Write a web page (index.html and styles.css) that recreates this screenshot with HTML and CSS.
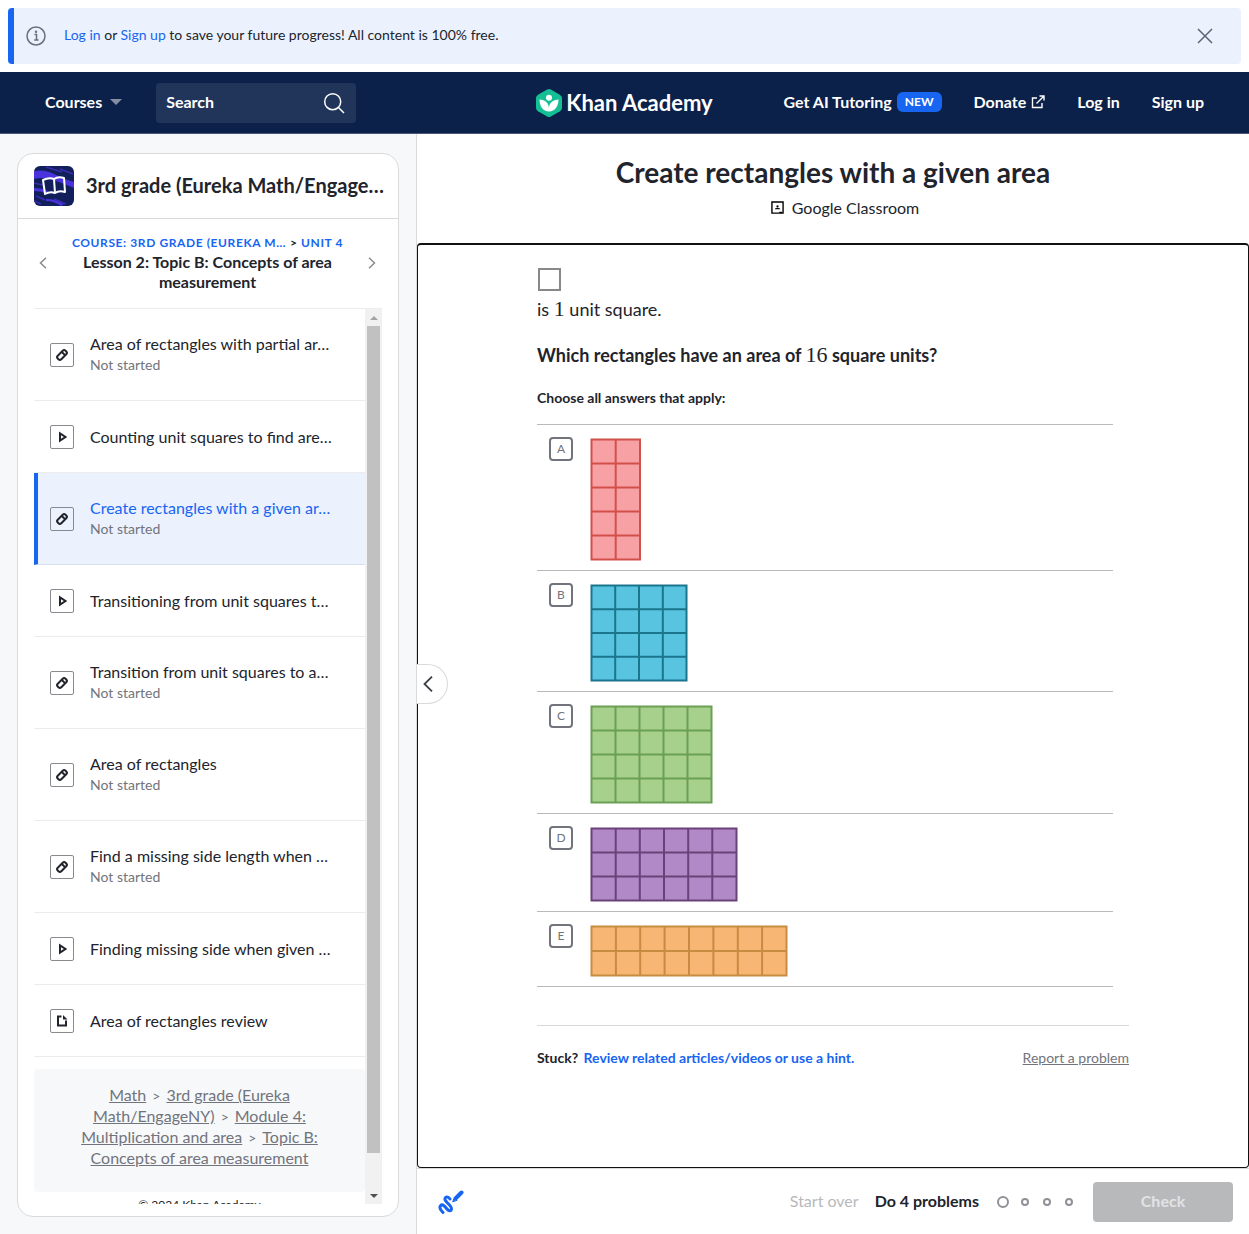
FILE: index.html
```html
<!DOCTYPE html>
<html lang="en">
<head>
<meta charset="utf-8">
<meta name="viewport" content="width=device-width, initial-scale=1">
<title>Create rectangles with a given area | Khan Academy</title>
<link rel="stylesheet" href="styles.css">
</head>
<body>
<svg class="sprite" aria-hidden="true">
  <symbol id="pencil" viewBox="0 0 22 22"><g transform="rotate(45 11 11)" fill="none" stroke="#21242c" stroke-width="2"><rect x="8.500" y="5.500" width="5" height="11" rx="2"/><path d="M8.500 9h5"/></g></symbol>
  <symbol id="play" viewBox="0 0 22 22"><path d="M9 7.300v7.400L14.500 11z" fill="none" stroke="#21242c" stroke-width="2"/></symbol>
  <symbol id="article" viewBox="0 0 22 22"><path d="M10.500 6.500H7v9h8v-5" fill="none" stroke="#21242c" stroke-width="2"/><path d="M12 5l4.500 4.500H12z" fill="#21242c"/></symbol>
</svg>

<aside class="banner">
  <svg class="banner-info" viewBox="0 0 20 20" fill="none" stroke="#6b6e78" stroke-width="1.500"><circle cx="10" cy="10" r="9"/><path d="M8.500 8.500h2V14M8.200 14h4.300"/><circle cx="10" cy="5.700" r=".5" fill="#6b6e78"/></svg>
  <p class="banner-text"><a href="#">Log in</a> or <a href="#">Sign up</a> to save your future progress! All content is 100% free.</p>
  <button class="icon-button" aria-label="Dismiss"><svg width="20" height="20" viewBox="0 0 20 20" fill="none" stroke="#5f6270" stroke-width="1.500"><path d="M3 3l14 14M17 3L3 17"/></svg></button>
</aside>

<header class="topbar">
  <div class="topbar-left">
    <button class="courses">Courses <span class="caret"></span></button>
    <form class="search">
      <input type="search" placeholder="Search" aria-label="Search">
      <svg width="22" height="22" viewBox="0 0 22 22" fill="none" stroke="#fff" stroke-width="1.500"><circle cx="9.700" cy="9.700" r="8"/><path d="M15.500 15.500l5.500 5.500"/></svg>
    </form>
  </div>
  <a class="logo" href="#">
    <svg width="26" height="28" viewBox="0 0 26 28"><path d="M11.200.5Q13-.5 14.800.5l9 5.200Q26 7 26 9v10q0 2-2 3.200l-9.200 5.300q-1.800 1-3.600 0L2 22.200Q0 21 0 19V9q0-2 2-3.300z" fill="#14bf96"/><circle cx="13" cy="8.700" r="3" fill="#fff"/><path d="M3.500 10.500c5.500 0 9.500 3.500 9.500 9 0-5.500 4-9 9.500-9 0 6.500-3.500 12-9.500 12s-9.500-5.500-9.500-12z" fill="#fff"/></svg>
    <span>Khan Academy</span>
  </a>
  <nav class="topbar-right">
    <a href="#">Get AI Tutoring <span class="badge">NEW</span></a>
    <a href="#">Donate <svg width="14" height="14" viewBox="0 0 14 14" fill="none" stroke="#fff" stroke-width="1.400"><path d="M6 3H1.500v9.500H11V8M8.500 1H13v4.500M13 1L5.500 8.500"/></svg></a>
    <a href="#">Log in</a>
    <a href="#">Sign up</a>
  </nav>
</header>

<div class="layout">
  <aside class="sidebar">
    <div class="card">
      <div class="course">
        <svg width="40" height="40" viewBox="0 0 40 40"><rect width="40" height="40" rx="6" fill="#11205b"/><path d="M0 5Q12 3 22 9q9 5 18 7v6Q26 16 16 13 7 11 0 13zM0 22q8 0 14 3l-2 2q-6-2-12-2zM12 33q10 0 18 5l-3 2q-7-5-15-5z" fill="#4a33dc"/><path d="M12 1l16 5M26 3l13 5M0 17l9 2M2 30l9 4M0 35l7 3M20 33l12 5" stroke="#3a2bb0" stroke-width="1.500"/><path d="M20 13Q15 11 9 14l2 14q5-3 10-1 4-3 10-1l-1-14q-6-2-10 1l1 14" fill="none" stroke="#fff" stroke-width="2" stroke-linejoin="round"/></svg>
        <h2>3rd grade (Eureka Math/Engage…</h2>
      </div>
      <div class="lesson">
        <a href="#" class="step" aria-label="Previous lesson"><svg width="8" height="12" viewBox="0 0 8 12"><path d="M7 .7L1.500 6 7 11.300"/></svg></a>
        <div class="lesson-title">
          <p class="crumb"><a href="#">Course: 3rd grade (Eureka M…</a><span>&gt;</span><a href="#">Unit 4</a></p>
          <h3>Lesson 2: Topic B: Concepts of area measurement</h3>
        </div>
        <a href="#" class="step" aria-label="Next lesson"><svg width="8" height="12" viewBox="0 0 8 12"><path d="M1 .7L6.500 6 1 11.300"/></svg></a>
      </div>
      <div class="pane">
        <div class="pane-content">
          <ul class="items">
            <li><a href="#" class="item"><svg><use href="#pencil"/></svg><span class="item-text"><span class="item-name">Area of rectangles with partial ar…</span><span class="item-status">Not started</span></span></a></li>
            <li><a href="#" class="item"><svg><use href="#play"/></svg><span class="item-text"><span class="item-name">Counting unit squares to find are…</span></span></a></li>
            <li><a href="#" class="item current" aria-current="page"><svg><use href="#pencil"/></svg><span class="item-text"><span class="item-name">Create rectangles with a given ar…</span><span class="item-status">Not started</span></span></a></li>
            <li><a href="#" class="item"><svg><use href="#play"/></svg><span class="item-text"><span class="item-name">Transitioning from unit squares t…</span></span></a></li>
            <li><a href="#" class="item"><svg><use href="#pencil"/></svg><span class="item-text"><span class="item-name">Transition from unit squares to a…</span><span class="item-status">Not started</span></span></a></li>
            <li><a href="#" class="item"><svg><use href="#pencil"/></svg><span class="item-text"><span class="item-name">Area of rectangles</span><span class="item-status">Not started</span></span></a></li>
            <li><a href="#" class="item"><svg><use href="#pencil"/></svg><span class="item-text"><span class="item-name">Find a missing side length when …</span><span class="item-status">Not started</span></span></a></li>
            <li><a href="#" class="item"><svg><use href="#play"/></svg><span class="item-text"><span class="item-name">Finding missing side when given …</span></span></a></li>
            <li><a href="#" class="item"><svg><use href="#article"/></svg><span class="item-text"><span class="item-name">Area of rectangles review</span></span></a></li>
          </ul>
          <p class="trail"><a href="#">Math</a><span>&gt;</span><a href="#">3rd grade (Eureka Math/EngageNY)</a><span>&gt;</span><a href="#">Module 4: Multiplication and area</a><span>&gt;</span><a href="#">Topic B: Concepts of area measurement</a></p>
          <p class="copyright">© 2024 Khan Academy</p>
        </div>
        <div class="scrollbar" aria-hidden="true"><span class="arrow up"></span><span class="track"><span class="thumb"></span></span><span class="arrow down"></span></div>
      </div>
    </div>
  </aside>

  <main class="main">
    <button class="collapse" aria-label="Collapse sidebar"><svg width="10" height="16" viewBox="0 0 10 16" fill="none" stroke="#3b3e46" stroke-width="1.800"><path d="M9 .7L1.500 8 9 15.300"/></svg></button>
    <div class="heading">
      <h1>Create rectangles with a given area</h1>
      <a href="#" class="classroom"><svg width="13" height="13" viewBox="0 0 14 14"><path d="M1 1h12v12H1z" fill="#fff" stroke="#000" stroke-width="1.500"/><circle cx="7" cy="5.800" r="1.200"/><path d="M4 9q0-1.700 3-1.700T10 9zM9 11.500h3V13H9z"/></svg>Google Classroom</a>
    </div>

    <section class="exercise">
      <div class="problem">
        <svg class="unit" width="24" height="24" viewBox="0 0 24 24"><path d="M2 2h21v21H2z" fill="#fff" stroke="#888" stroke-width="2"/></svg>
        <p class="intro">is <span class="math">1</span> unit square.</p>
        <p class="question">Which rectangles have an area of <span class="math">16</span> square units?</p>
        <fieldset class="choices">
          <legend>Choose all answers that apply:</legend>
          <label class="choice"><span class="box"><input type="checkbox" name="answer" value="a"><span>A</span></span>
            <svg class="red" width="51" height="123" viewBox="0 0 51 123"><path d="M1.500 1.500h48.500v120H1.500zM25.700 1.500v120M1.500 25.500H50M1.500 49.500H50M1.500 73.500H50M1.500 97.500H50"/></svg></label>
          <label class="choice"><span class="box"><input type="checkbox" name="answer" value="b"><span>B</span></span>
            <svg class="blue" width="98" height="98" viewBox="0 0 98 98"><path d="M1.500 1.500h95v95h-95zM25.200 1.500v95M49 1.500v95M72.800 1.500v95M1.500 25.200h95M1.500 49h95M1.500 72.800h95"/></svg></label>
          <label class="choice"><span class="box"><input type="checkbox" name="answer" value="c"><span>C</span></span>
            <svg class="green" width="123" height="99" viewBox="0 0 123 99"><path d="M1.500 1.500h120v96H1.500zM25.500 1.500v96M49.500 1.500v96M73.500 1.500v96M97.500 1.500v96M1.500 25.500h120M1.500 49.500h120M1.500 73.500h120"/></svg></label>
          <label class="choice"><span class="box"><input type="checkbox" name="answer" value="d"><span>D</span></span>
            <svg class="purple" width="148" height="75" viewBox="0 0 148 75"><path d="M1.500 1.500h145v72h-145zM25.700 1.500v72M49.800 1.500v72M74 1.500v72M98.200 1.500v72M122.300 1.500v72M1.500 25.500h145M1.500 49.500h145"/></svg></label>
          <label class="choice"><span class="box"><input type="checkbox" name="answer" value="e"><span>E</span></span>
            <svg class="orange" width="198" height="52" viewBox="0 0 198 52"><path d="M1.500 1.500h195v49h-195zM25.900 1.500v49M50.200 1.500v49M74.600 1.500v49M99 1.500v49M123.400 1.500v49M147.800 1.500v49M172.100 1.500v49M1.500 26h195"/></svg></label>
        </fieldset>
        <div class="help">
          <p>Stuck? <a href="#">Review related articles/videos or use a hint.</a></p>
          <a href="#" class="report">Report a problem</a>
        </div>
      </div>
    </section>

    <footer class="taskbar">
      <button class="icon-button scratchpad" aria-label="Show scratchpad"><svg width="26" height="26" viewBox="0 0 26 26" fill="none" stroke="#1865f2" stroke-linecap="round"><path d="M12 10C10 7 6.500 7.500 7 10.500c.3 2.500 6.500 6 6.500 9s-3 2.500-4.500.5-4.500-5.500-6.300-3.500.3 5 2.300 7" stroke-width="3"/><path d="M18 9l5.500-5.500" stroke-width="4"/><path d="M14.800 12.500l1.500-4 2.500 2.500z" fill="#1865f2" stroke-width="1"/></svg></button>
      <button class="start-over" disabled>Start over</button>
      <p class="goal">Do 4 problems</p>
      <div class="dots"><span class="dot next"></span><span class="dot"></span><span class="dot"></span><span class="dot"></span></div>
      <button class="check" disabled>Check</button>
    </footer>
  </main>
</div>
</body>
</html>
```
FILE: styles.css
```css
* { box-sizing: border-box; }

body {
  margin: 0;
  height: 100vh;
  display: flex;
  flex-direction: column;
  font: 16px/20px Lato, "Liberation Sans", sans-serif;
  color: #21242c;
  background: #fff;
}

h1, h2, h3, p, ul { margin: 0; padding: 0; }
ul { list-style: none; }
a { color: #1865f2; text-decoration: none; }
svg { display: block; flex: none; }
button, input { font: inherit; color: inherit; }
button { padding: 0; border: 0; background: none; cursor: pointer; }
.sprite { position: absolute; width: 0; height: 0; }
.icon-button { display: flex; }

/* Banner */
.banner {
  display: flex;
  align-items: center;
  min-height: 56px;
  margin: 8px;
  padding: 0 26px 0 12px;
  border-left: 6px solid #1865f2;
  border-radius: 4px;
  background: #ebf2fe;
  font-size: 14px;
}
.banner-info { width: 20px; height: 20px; margin-right: 18px; }
.banner-text { flex: 1; padding-bottom: 2px; }

/* Top bar */
.topbar {
  display: grid;
  grid-template-columns: 1fr auto 1fr;
  align-items: center;
  flex: none;
  min-height: 62px;
  padding: 0 45px;
  border-bottom: 1px solid #4a587b;
  background: #0b2149;
  color: #fff;
  font-weight: 700;
}
.topbar a { color: #fff; }
.topbar-left { display: flex; align-items: center; gap: 34px; }
.courses { display: flex; align-items: center; gap: 8px; padding-bottom: 2px; }
.caret {
  border: 6px solid transparent;
  border-top-color: #858fa4;
  border-bottom: 0;
}
.search {
  display: flex;
  align-items: center;
  width: 200px;
  height: 40px;
  padding: 0 11px 0 10px;
  border-radius: 4px;
  background: #21355b;
}
.search input { flex: 1; min-width: 0; padding: 0 0 2px; border: 0; outline: 0; background: none; }
.search input::placeholder { color: #fff; opacity: 1; }
.logo { display: flex; align-items: center; gap: 4px; font-size: 22px; line-height: 28px; }
.topbar-right { display: flex; justify-content: flex-end; gap: 32px; }
.topbar-right a { display: flex; align-items: center; gap: 5px; padding-bottom: 2px; }
.badge {
  padding: 0 8px;
  border-radius: 6px;
  background: #1865f2;
  font-size: 12px;
}

/* Layout */
.layout {
  display: grid;
  grid-template-columns: 417px 1fr;
  flex: 1;
  min-height: 0;
}

/* Sidebar */
.sidebar {
  min-height: 0;
  padding: 19px 17px 17px;
  border-right: 1px solid #d8dadc;
  background: #f7f8fa;
}
.card {
  display: flex;
  flex-direction: column;
  height: 100%;
  padding-bottom: 12px;
  border: 1px solid #d9dadc;
  border-radius: 16px;
  background: #fff;
}
.course {
  display: flex;
  align-items: center;
  gap: 12px;
  padding: 12px 12px 12px 16px;
  border-bottom: 1px solid #d9dadc;
}
.course h2 { padding-bottom: 2px; font-size: 20px; line-height: 24px; white-space: nowrap; }
.lesson { display: flex; align-items: center; padding: 14px 22px 16px 21px; }
.step svg { fill: none; stroke: #8a8c93; stroke-width: 1.5; }
.lesson-title { flex: 1; min-width: 0; padding: 0 16px; text-align: center; }
.lesson-title h3 { padding: 0 8px; font-size: 16px; }
.crumb {
  display: flex;
  justify-content: center;
  gap: 4px;
  font-size: 12px;
  font-weight: 700;
  line-height: 19px;
  text-transform: uppercase;
  white-space: nowrap;
}
.crumb a { letter-spacing: 0.05em; }
.pane { display: flex; flex: 1; min-height: 0; margin: 0 16px; border-top: 1px solid #ececed; }
.pane-content { flex: 1; min-width: 0; overflow: hidden; }
.item {
  display: flex;
  align-items: center;
  gap: 16px;
  min-height: 72px;
  padding: 0 16px;
  border-bottom: 1px solid #ececed;
  color: #21242c;
}
.item svg { width: 24px; height: 24px; border: 1px solid #888a90; border-radius: 2px; }
.item-text { flex: 1; min-width: 0; padding: 25px 0; }
.item-name { display: block; }
.item-status { display: block; padding-top: 1px; color: #71747c; font-size: 14px; }
.item.current {
  padding-left: 12px;
  border-left: 4px solid #1865f2;
  border-bottom-color: #d7e0ee;
  background: #ebf2fe;
}
.item.current .item-name { color: #1865f2; }
.trail {
  margin-top: 12px;
  padding: 15px 40px 24px;
  border-radius: 4px;
  background: #f7f8fa;
  color: #71747c;
  line-height: 21px;
  text-align: center;
}
.trail a { color: #71747c; text-decoration: underline; }
.trail span { margin: 0 6px; font-size: 14px; line-height: 1; }
.copyright { padding-top: 3px; font-size: 12px; text-align: center; }
.scrollbar { display: flex; flex-direction: column; flex: none; width: 17px; background: #f1f1f1; }
.arrow { display: grid; place-items: center; height: 17px; }
.arrow::before { content: ""; border: 4px solid transparent; }
.up::before { border-top: 0; border-bottom-color: #a3a3a3; }
.down::before { border-bottom: 0; border-top-color: #505050; }
.track { display: block; flex: 1; padding: 0 2px; }
.thumb { display: block; height: 96%; background: #c1c1c1; }

/* Main column */
.main { position: relative; display: flex; flex-direction: column; min-width: 0; min-height: 0; }
.collapse {
  position: absolute;
  top: 50%;
  left: 0;
  display: grid;
  align-items: center;
  width: 31px;
  height: 40px;
  margin-top: -20px;
  padding-left: 6px;
  border: 1px solid #d9dadc;
  border-left: 0;
  border-radius: 0 20px 20px 0;
  background: #fff;
}
.heading { display: flex; flex-direction: column; align-items: center; gap: 9px; padding: 22px 16px 25px; }
.heading h1 { font-size: 28px; line-height: 32px; }
.classroom { display: flex; align-items: center; gap: 8px; padding-left: 24px; color: #21242c; line-height: 21px; }
.exercise {
  flex: 1;
  min-height: 0;
  overflow: auto;
  padding: 22px 16px 32px;
  border: 1px solid #111;
  border-top-width: 2px;
  border-radius: 4px;
}
.problem { max-width: 592px; margin: 0 auto; }
.intro { padding-top: 6px; font-size: 18px; line-height: 24px; }
.question { padding: 22px 0 21px; font-size: 18px; font-weight: 700; line-height: 24px; }
.math { font-family: "Liberation Serif", serif; font-size: 22px; font-weight: 400; line-height: 1; }
.choices { margin: 0 16px 0 0; padding: 0; border: 0; }
.choices legend {
  width: 100%;
  padding: 0 0 16px;
  border-bottom: 1px solid #b8b9bd;
  font-size: 14px;
  font-weight: 700;
}
.choice {
  display: flex;
  align-items: flex-start;
  gap: 17px;
  padding: 12px 12px 9px;
  border-bottom: 1px solid #b8b9bd;
}
.choice > svg { margin-top: 1px; stroke-width: 2; }
.box { display: grid; color: #71747c; font-size: 12px; text-align: center; }
.box > * { grid-area: 1 / 1; }
.box span { line-height: 24px; }
.box input {
  appearance: none;
  width: 24px;
  height: 24px;
  margin: 0;
  border: 2px solid #71747c;
  border-radius: 4px;
}
.red { fill: #f8a1a4; stroke: #d1504b; }
.blue { fill: #58c4df; stroke: #1b758d; }
.green { fill: #a6d08b; stroke: #6a9f54; }
.purple { fill: #b189c7; stroke: #6a4279; }
.orange { fill: #f8b674; stroke: #c78b42; }
.help {
  display: flex;
  justify-content: space-between;
  margin-top: 38px;
  padding-top: 22px;
  border-top: 1px solid #d9dadc;
  font-size: 14px;
}
.help p { font-weight: 700; }
.help p a { margin-left: 2px; }
.help .report { color: #71747c; text-decoration: underline; }

/* Task bar */
.taskbar {
  display: flex;
  align-items: center;
  flex: none;
  padding: 13px 16px 12px 21px;
  border-top: 1px solid #d9dadc;
}
.scratchpad { margin-right: auto; }
.start-over { padding-bottom: 2px; color: #b8b9bb; }
.goal { margin: 0 13px 0 16px; padding-bottom: 2px; font-weight: 700; }
.dots { display: grid; grid-auto-flow: column; grid-auto-columns: 22px; place-items: center; margin-right: 13px; }
.dot { width: 8px; height: 8px; border: 2px solid #8f9197; border-radius: 50%; }
.dot.next { width: 12px; height: 12px; }
.check {
  width: 140px;
  height: 40px;
  padding-bottom: 2px;
  border-radius: 4px;
  background: #b8b9bb;
  color: #e2e3e5;
  font-weight: 700;
}
```
